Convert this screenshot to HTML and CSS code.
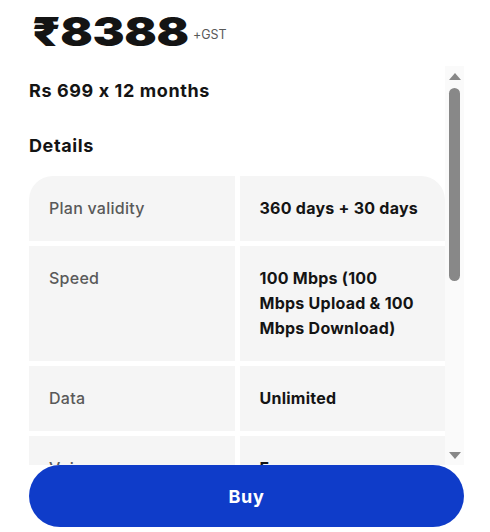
FILE: index.html
```html
<!DOCTYPE html>
<html lang="en">
<head>
    <meta charset="UTF-8">
    <meta name="viewport" content="width=device-width, initial-scale=1.0">
    <title>Plan details</title>
    <link rel="stylesheet" href="styles.css">
</head>
<body>
    <div class="price-row">
        <span class="price">₹8388</span>
        <span class="tax">+GST</span>
    </div>

    <div class="details-box">
        <div class="details-content">
            <div class="emi">Rs 699 x 12 months</div>
            <h2 class="details-title">Details</h2>

            <!-- Plan details table -->
            <div class="details-table">
                <div class="cell label first-left">Plan validity</div>
                <div class="cell value first-right">360 days + 30 days</div>

                <div class="cell label">Speed</div>
                <div class="cell value">100 Mbps (100 Mbps Upload &amp; 100 Mbps Download)</div>

                <div class="cell label">Data</div>
                <div class="cell value">Unlimited</div>

                <div class="cell label">Voice</div>
                <div class="cell value">Free</div>

                <div class="cell label">TV channels</div>
                <div class="cell value">800+ Digital TV channels</div>

                <div class="cell label">OTT apps</div>
                <div class="cell value">14+ apps</div>
            </div>
        </div>

        <!-- scrollbar -->
        <div class="scrollbar">
            <span class="arrow up"></span>
            <span class="thumb"></span>
            <span class="arrow down"></span>
        </div>
    </div>

    <button class="buy-btn">Buy</button>
</body>
</html>
```

FILE: styles.css
```css
body {
    margin: 0;
    background: #fff;
    font-family: Inter, "Noto Sans", sans-serif;
    font-feature-settings: "calt" 0;
    color: #141414;
}

.price-row {
    display: flex;
    align-items: flex-start;
    padding: 12px 0 0 32px;
    height: 40px;
    margin-bottom: 14px;
}

.price {
    display: inline-block;
    width: 156px;
    font-size: 40px;
    line-height: 40px;
    font-weight: 900;
    letter-spacing: -0.3px;
    transform: scaleX(1.2);
    transform-origin: left center;
}

.tax {
    font-size: 12.5px;
    line-height: 12px;
    color: #595959;
    margin: 17px 0 0 5px;
}

.details-box {
    display: flex;
    margin-left: 29px;
    width: 435px;
    height: 399px;
    overflow: hidden;
}

.details-content {
    flex: 1;
    min-width: 0;
}

.scrollbar {
    width: 19px;
    background: #fafafa;
    display: flex;
    flex-direction: column;
    align-items: center;
}

.arrow {
    width: 0;
    height: 0;
    border-left: 6px solid transparent;
    border-right: 6px solid transparent;
}

.arrow.up {
    margin-top: 7px;
    border-bottom: 7px solid #888;
}

.arrow.down {
    margin-top: auto;
    margin-bottom: 6px;
    border-top: 7px solid #888;
}

.thumb {
    margin-top: 8px;
    width: 11px;
    height: 193px;
    background: #888;
    border-radius: 6px;
}

.emi {
    padding-top: 12px;
    font-size: 18px;
    line-height: 25px;
    font-weight: 700;
    letter-spacing: 0.6px;
}

.details-title {
    margin: 30px 0 18px;
    font-size: 18px;
    line-height: 25px;
    font-weight: 700;
    letter-spacing: 0.6px;
}

.details-table {
    display: grid;
    grid-template-columns: 1fr 1fr;
    gap: 5px;
}

.cell {
    background: #f5f5f5;
    padding: 20px;
    font-size: 16px;
    line-height: 25px;
    letter-spacing: 0.25px;
}

.label {
    color: #595959;
    font-weight: 500;
}

.value {
    font-weight: 700;
    padding-right: 22px;
}

.first-left {
    border-top-left-radius: 24px;
}

.first-right {
    border-top-right-radius: 24px;
}

.buy-btn {
    display: block;
    margin-left: 29px;
    width: 435px;
    height: 62px;
    border: none;
    border-radius: 31px;
    background: #0f3cc9;
    color: #fff;
    font-family: Inter, "Noto Sans", sans-serif;
    font-size: 18px;
    font-weight: 700;
    letter-spacing: 0.6px;
    cursor: pointer;
}
```
